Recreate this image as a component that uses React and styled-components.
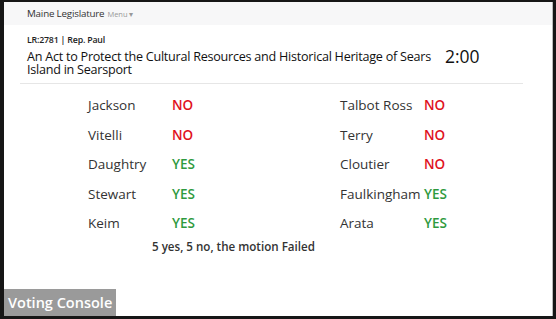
import React from "react";
import styled, { createGlobalStyle } from "styled-components";

const Global = createGlobalStyle`
  html, body { margin: 0; padding: 0; background: #111; }
  body { font-family: "Open Sans", "Noto Sans", sans-serif; }
`;

const Frame = styled.div`
  width: 556px;
  height: 319px;
  box-sizing: border-box;
  background: #161616;
  padding: 2px 3px 3px 4px;
  display: flex;
`;

const Screen = styled.div`
  position: relative;
  flex: 1;
  background: #fff;
  display: flex;
  flex-direction: column;
  overflow: hidden;
  border-right: 1px solid #bbb;
`;

const Navbar = styled.div`
  height: 23px;
  background: #f7f7f8;
  display: flex;
  align-items: center;
  padding-left: 23px;
  gap: 3px;
`;

const Brand = styled.span`
  font-size: 9.8px;
  color: #333;
  letter-spacing: -0.2px;
`;

const Menu = styled.span`
  font-size: 7.5px;
  color: #999;
`;

const Header = styled.div`
  margin: 10px 29px 0 16px;
  padding: 0 0 7px 7px;
  border-bottom: 1px solid #e6e6e6;
  display: flex;
  align-items: flex-start;
`;

const TitleBlock = styled.div`
  width: 414px;
`;

const Sub = styled.div`
  font-size: 8.8px;
  font-weight: 600;
  color: #222;
  line-height: 10px;
  letter-spacing: -0.2px;
`;

const Title = styled.div`
  font-size: 12.6px;
  letter-spacing: -0.25px;
  color: #111;
  line-height: 12.7px;
  margin-top: 6px;
`;

const Timer = styled.div`
  font-size: 17.5px;
  color: #111;
  margin-left: 4px;
  margin-top: 11px;
  line-height: 20px;
`;

const Votes = styled.div`
  display: grid;
  grid-template-columns: 252px 120px;
  padding-left: 84px;
  margin-top: 6px;
`;

const Column = styled.div`
  display: flex;
  flex-direction: column;
`;

const Row = styled.div`
  display: flex;
  height: 29.5px;
  align-items: center;
  font-size: 13.5px;
`;

const Name = styled.span`
  width: 84px;
  color: #333;
`;

const Vote = styled.span`
  font-weight: 600;
  color: ${(p) => (p.$yes ? "#2e9a3e" : "#e0121d")};
`;

const Summary = styled.div`
  padding-left: 148px;
  font-size: 11.6px;
  font-weight: 600;
  color: #333;
  margin-top: 1px;
`;

const Badge = styled.div`
  position: absolute;
  left: 0;
  bottom: 0;
  background: #9a9a9a;
  color: #fff;
  font-size: 14.5px;
  font-weight: 600;
  padding: 4px 4px 3px 4px;
  line-height: 20px;
`;

const left = [
  ["Jackson", false],
  ["Vitelli", false],
  ["Daughtry", true],
  ["Stewart", true],
  ["Keim", true],
];
const right = [
  ["Talbot Ross", false],
  ["Terry", false],
  ["Cloutier", false],
  ["Faulkingham", true],
  ["Arata", true],
];

const VoteColumn = ({ items }) => (
  <Column>
    {items.map(([n, y]) => (
      <Row key={n}>
        <Name>{n}</Name>
        <Vote $yes={y}>{y ? "YES" : "NO"}</Vote>
      </Row>
    ))}
  </Column>
);

export default function App() {
  return (
    <>
      <Global />
      <Frame>
        <Screen>
          <Navbar>
            <Brand>Maine Legislature</Brand>
            <Menu>Menu ▾</Menu>
          </Navbar>
          <Header>
            <TitleBlock>
              <Sub>LR:2781 | Rep. Paul</Sub>
              <Title>
                An Act to Protect the Cultural Resources and Historical Heritage of Sears Island in Searsport
              </Title>
            </TitleBlock>
            <Timer>2:00</Timer>
          </Header>
          <Votes>
            <VoteColumn items={left} />
            <VoteColumn items={right} />
          </Votes>
          <Summary>5 yes, 5 no, the motion Failed</Summary>
          <Badge>Voting Console</Badge>
        </Screen>
      </Frame>
    </>
  );
}
